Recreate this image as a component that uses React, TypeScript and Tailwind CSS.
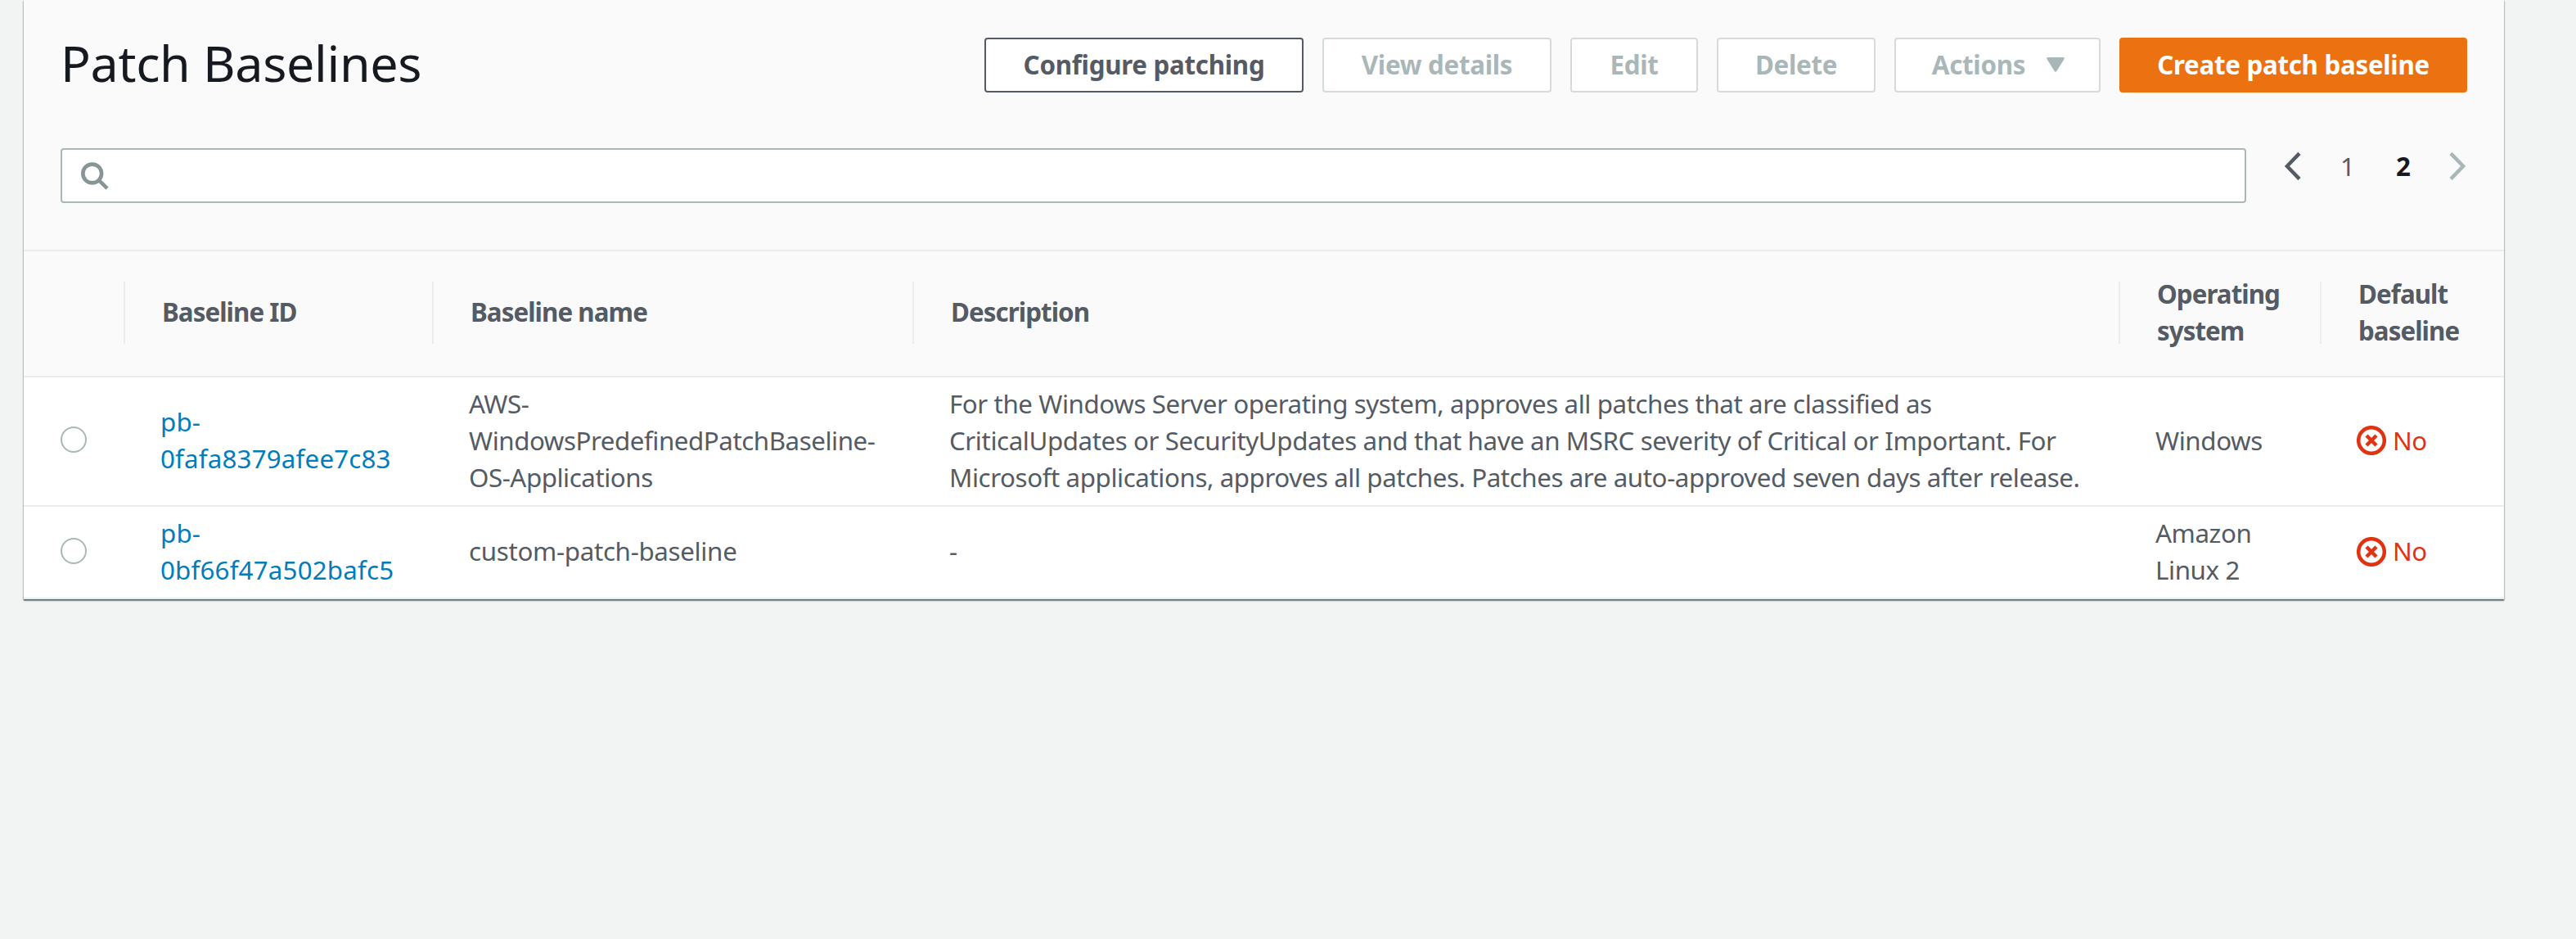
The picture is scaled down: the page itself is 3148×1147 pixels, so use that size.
import type { ReactNode } from "react";

const GRID = "grid grid-cols-[124px_377px_587px_1474px_246px_223px]";

function Lines({ items }: { items: string[] }) {
  return (
    <>
      {items.map((line) => (
        <span key={line} className="block whitespace-nowrap">
          {line}
        </span>
      ))}
    </>
  );
}

function SearchIcon() {
  return (
    <svg className="ml-[21px] size-[40px] shrink-0" viewBox="0 0 40 40" fill="none" stroke="#879596" strokeWidth="4.6">
      <circle cx="15.7" cy="17" r="11.4" />
      <path d="M23.8 25.1 34 35.2" />
    </svg>
  );
}

function Chevron({ direction }: { direction: "left" | "right" }) {
  return (
    <svg className="h-[36px] w-[21px] shrink-0" viewBox="0 0 21 36" fill="none" stroke="currentColor" strokeWidth="4.5">
      <path d={direction === "left" ? "M19 2.4 3.9 18 19 33.6" : "M2 2.4 17.1 18 2 33.6"} />
    </svg>
  );
}

function NoStatus() {
  return (
    <span className="flex items-center text-[#df3312]">
      <svg className="size-[36px] shrink-0" viewBox="0 0 36 36" fill="none" stroke="currentColor" strokeWidth="4.5">
        <circle cx="18" cy="18" r="15.8" />
        <path d="m12 12 12 12M24 12 12 24" />
      </svg>
      <span className="ml-[8px] tracking-[-0.02em]">No</span>
    </span>
  );
}

function Button({ width, tone, children }: { width: string; tone: string; children: ReactNode }) {
  return (
    <button
      className={`flex h-[67px] items-center justify-center rounded-[4px] border-2 pb-px text-[31.3px] font-bold tracking-[-0.009em] whitespace-nowrap ${width} ${tone}`}
    >
      {children}
    </button>
  );
}

const disabled = "border-[#d5dbdb] bg-white text-[#aab7b8]";

function HeaderCell({ lines, last }: { lines: string[]; last?: boolean }) {
  return (
    <div className={`flex h-[76px] items-center pb-px pl-[45px] ${last ? "" : "border-r-2 border-[#eaeded]"}`}>
      <div className="tracking-[-0.03em]">
        <Lines items={lines} />
      </div>
    </div>
  );
}

type Baseline = { id: string[]; name: string[]; description: string[]; os: string[] };

const baselines: Baseline[] = [
  {
    id: ["pb-", "0fafa8379afee7c83"],
    name: ["AWS-", "WindowsPredefinedPatchBaseline-", "OS-Applications"],
    description: [
      "For the Windows Server operating system, approves all patches that are classified as",
      "CriticalUpdates or SecurityUpdates and that have an MSRC severity of Critical or Important. For",
      "Microsoft applications, approves all patches. Patches are auto-approved seven days after release.",
    ],
    os: ["Windows"],
  },
  {
    id: ["pb-", "0bf66f47a502bafc5"],
    name: ["custom-patch-baseline"],
    description: ["-"],
    os: ["Amazon", "Linux 2"],
  },
];

export default function App() {
  return (
    <div className="min-h-[1147px] bg-[#f2f3f3] pr-[88px] pl-[29px] font-['Noto_Sans','Open_Sans',sans-serif] text-[31.3px] leading-[45px] text-[#545b64]">
      <main className="bg-white shadow-[0_2px_0_0_rgba(0,28,36,0.28),0_2px_2px_0_rgba(0,28,36,0.3),1px_1px_1px_0_rgba(0,28,36,0.15),-1px_1px_1px_0_rgba(0,28,36,0.15)]">
        <header className="h-[307px] border-b-2 border-[#eaeded] bg-[#fafafa] px-[45px] pt-[46px]">
          <div className="flex h-[67px] items-center justify-between">
            <h1 className="pb-[6px] text-[61px] leading-none tracking-[-0.0055em] whitespace-nowrap text-[#16191f]">Patch Baselines</h1>
            <div className="flex gap-[23px]">
              <Button width="w-[390px]" tone="border-[#545b64] bg-white text-[#545b64]">
                Configure patching
              </Button>
              <Button width="w-[280px]" tone={disabled}>
                View details
              </Button>
              <Button width="w-[156px]" tone={disabled}>
                Edit
              </Button>
              <Button width="w-[194px]" tone={disabled}>
                Delete
              </Button>
              <Button width="w-[252px]" tone={disabled}>
                <span className="ml-[2px]">Actions</span>
                <svg className="ml-[26px] h-[18px] w-[22px]" viewBox="0 0 22 18" fill="#aab7b8" stroke="#aab7b8" strokeWidth="3" strokeLinejoin="round">
                  <path d="M1.8 1.5h18.4L11 16.2z" />
                </svg>
              </Button>
              <Button width="w-[425px]" tone="border-[#ec7211] bg-[#ec7211] text-white">
                Create patch baseline
              </Button>
            </div>
          </div>
          <div className="mt-[68px] flex items-start">
            <div className="flex h-[67px] w-[2671px] items-center rounded-[4px] border-2 border-[#aab7b8] bg-white">
              <SearchIcon />
            </div>
            <nav className="ml-[46px] flex h-[44px] items-center">
              <Chevron direction="left" />
              <span className="ml-[48px] w-[18px] text-center">1</span>
              <span className="ml-[50px] w-[18px] text-center font-bold text-[#16191f]">2</span>
              <span className="ml-[47px] text-[#aab7b8]">
                <Chevron direction="right" />
              </span>
            </nav>
          </div>
        </header>

        <div className={`${GRID} h-[154px] border-b-2 border-[#eaeded] bg-[#fafafa] pt-[37px] font-bold`}>
          <HeaderCell lines={[]} />
          <HeaderCell lines={["Baseline ID"]} />
          <HeaderCell lines={["Baseline name"]} />
          <HeaderCell lines={["Description"]} />
          <HeaderCell lines={["Operating", "system"]} />
          <HeaderCell lines={["Default", "baseline"]} last />
        </div>

        {baselines.map((row) => (
          <div
            key={row.id[1]}
            className={`${GRID} items-center border-b-2 border-[#eaeded] pb-[2px] ${row.name.length > 1 ? "h-[158px]" : "h-[113px]"}`}
          >
            <div className="pl-[45px]">
              <div className="size-[32px] -translate-y-px rounded-full border-2 border-[#aab7b8] bg-white" />
            </div>
            <div className="pl-[43px] tracking-[0.006em] text-[#007dbc]">
              <Lines items={row.id} />
            </div>
            <div className={`pl-[43px] ${row.name.length > 1 ? "tracking-[-0.0145em]" : "tracking-[-0.01em]"}`}>
              <Lines items={row.name} />
            </div>
            <div className="pl-[43px] tracking-[-0.0135em]">
              <Lines items={row.description} />
            </div>
            <div className="pl-[43px] tracking-[-0.013em]">
              <Lines items={row.os} />
            </div>
            <div className="pl-[43px]">
              <NoStatus />
            </div>
          </div>
        ))}
      </main>
    </div>
  );
}
